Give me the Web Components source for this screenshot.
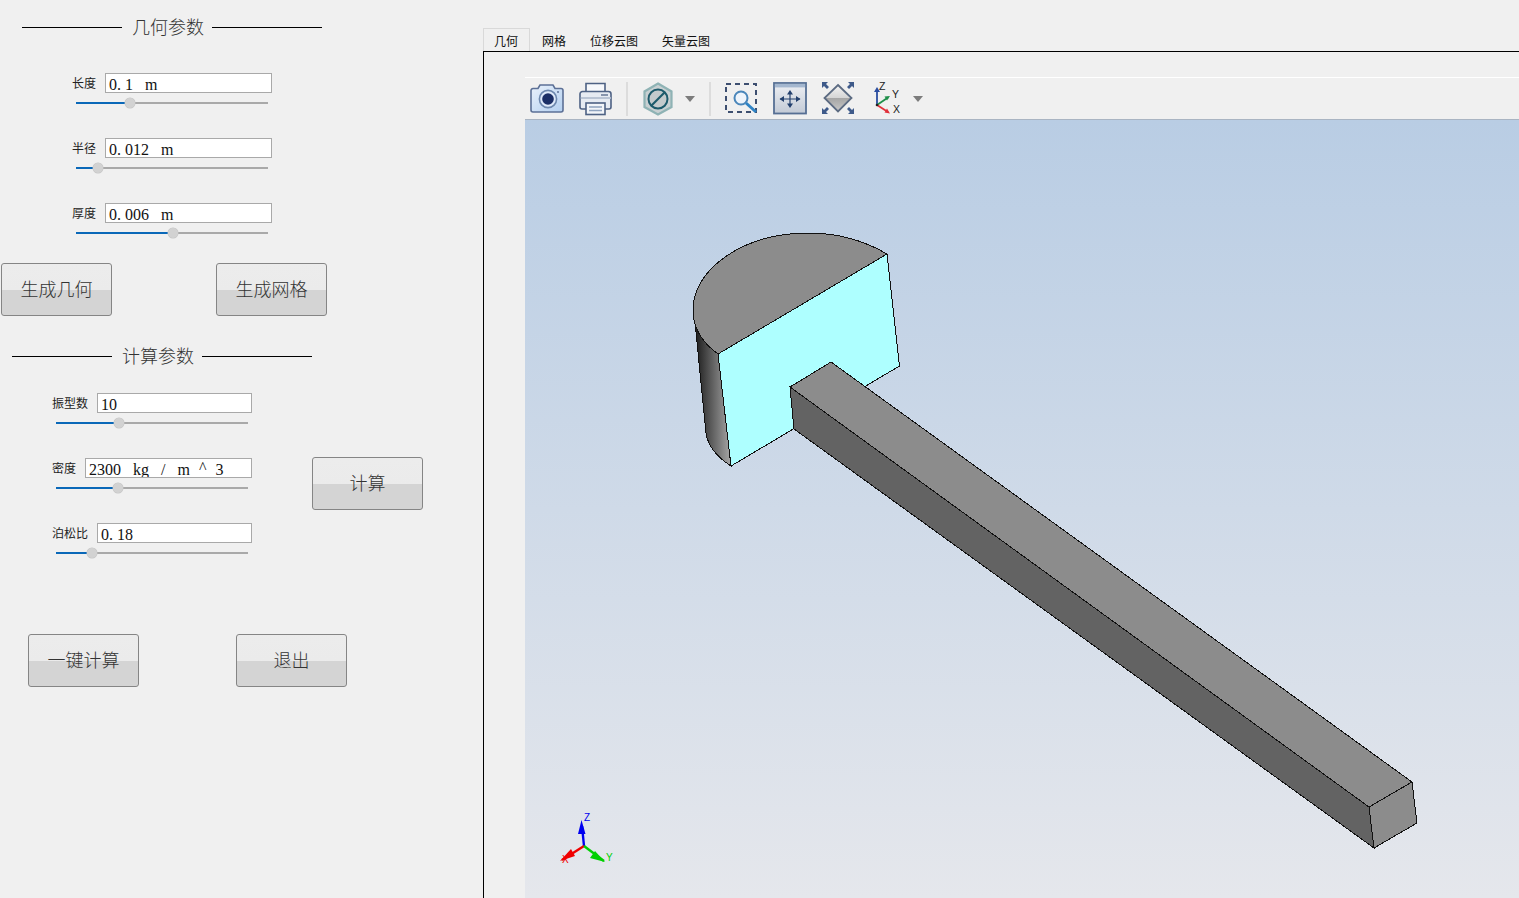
<!DOCTYPE html>
<html lang="zh">
<head>
<meta charset="utf-8">
<title>几何参数</title>
<style>
  html, body { margin: 0; padding: 0; height: 100%; overflow: hidden; background: #f0f0f0; }
  body { font-family: "Liberation Serif", "Noto Sans CJK SC", serif; }
</style>
</head>
<body>
<app-shell>
  <side-panel slot="side">
    <section-title inset="22">几何参数</section-title>
    <param-group inset="72" top="19">
      <param-field label="长度" value="0.1 m" pos="54"></param-field>
      <param-field label="半径" value="0.012 m" pos="22"></param-field>
      <param-field label="厚度" value="0.006 m" pos="97"></param-field>
    </param-group>
    <button-row top="20" inset="1" gap="104">
      <qt-button>生成几何</qt-button>
      <qt-button>生成网格</qt-button>
    </button-row>
    <section-title inset="12" top="13">计算参数</section-title>
    <compute-row>
      <param-group inset="52" top="10">
        <param-field label="振型数" value="10" pos="63"></param-field>
        <param-field label="密度" value="2300 kg / m ^ 3" pos="62"></param-field>
        <param-field label="泊松比" value="0.18" pos="36"></param-field>
      </param-group>
      <qt-button slot="action">计算</qt-button>
    </compute-row>
    <button-row top="71" inset="28" gap="97">
      <qt-button>一键计算</qt-button>
      <qt-button>退出</qt-button>
    </button-row>
  </side-panel>
  <tab-view>
    <tab-item active>几何</tab-item>
    <tab-item>网格</tab-item>
    <tab-item>位移云图</tab-item>
    <tab-item>矢量云图</tab-item>
    <cad-view slot="page"></cad-view>
  </tab-view>
</app-shell>

<script>
const cjk = '"Noto Sans CJK SC", sans-serif'

customElements.define('app-shell', class extends HTMLElement {
  constructor() {
    super()
    this.attachShadow({ mode: 'open' }).innerHTML = `
      <style>
        :host { display: flex; width: 1519px; height: 898px; overflow: hidden; background: #f0f0f0; }
        .side { flex: 0 0 483px; }
        .main { flex: 1; min-width: 0; display: flex; }
      </style>
      <div class="side"><slot name="side"></slot></div>
      <div class="main"><slot></slot></div>`
  }
})

customElements.define('side-panel', class extends HTMLElement {
  constructor() {
    super()
    this.attachShadow({ mode: 'open' }).innerHTML = `
      <style>:host { display: flex; flex-direction: column; align-items: flex-start; }</style>
      <slot></slot>`
  }
})

customElements.define('section-title', class extends HTMLElement {
  constructor() {
    super()
    this.attachShadow({ mode: 'open' }).innerHTML = `
      <style>
        :host { display: flex; align-items: center; gap: 10px; height: 54px; }
        i { display: block; width: 100px; height: 1px; background: #000; }
        i:last-child { width: 110px; margin-left: -1px; }
        span { font: 300 18px/24px ${cjk}; color: #333; width: 71px; white-space: nowrap; margin-top: -2px; }
      </style>
      <i></i><span><slot></slot></span><i></i>`
  }
  connectedCallback() {
    this.style.marginLeft = (this.getAttribute('inset') || 0) + 'px'
    this.style.marginTop = (this.getAttribute('top') || 0) + 'px'
  }
})

customElements.define('param-group', class extends HTMLElement {
  constructor() {
    super()
    this.attachShadow({ mode: 'open' }).innerHTML = `
      <style>:host { display: flex; flex-direction: column; gap: 25px; width: 200px; }</style>
      <slot></slot>`
  }
  connectedCallback() {
    this.style.marginLeft = this.getAttribute('inset') + 'px'
    this.style.marginTop = this.getAttribute('top') + 'px'
  }
})

customElements.define('param-field', class extends HTMLElement {
  constructor() {
    super()
    this.attachShadow({ mode: 'open' }).innerHTML = `
      <style>
        :host { display: block; height: 40px; }
        .row { display: flex; align-items: center; gap: 9px; height: 20px; }
        label { font: 12px/16px ${cjk}; color: #222; white-space: nowrap; }
        .box {
          flex: 1; min-width: 0; box-sizing: border-box; height: 20px; padding-left: 3px;
          background: #fff; border: 1px solid #a9a9a9; overflow: hidden;
          font: 16px/21px "Liberation Serif", serif; color: #111; white-space: pre; word-spacing: 8px;
        }
        .dot { margin-right: 4px; }
        .hat { margin: 0 -3px; position: relative; top: -2px; }
        qt-slider { margin: 5px 4px 0; }
      </style>
      <div class="row"><label></label><div class="box"></div></div>
      <qt-slider></qt-slider>`
  }
  connectedCallback() {
    const root = this.shadowRoot
    root.querySelector('label').textContent = this.getAttribute('label')
    const box = root.querySelector('.box')
    box.textContent = ''
    // SimSun-like spacing: wide period, narrow caret
    this.getAttribute('value').split(/([.^])/).forEach(part => {
      if (part === '.' || part === '^') {
        const mark = document.createElement('span')
        mark.className = part === '.' ? 'dot' : 'hat'
        mark.textContent = part
        box.append(mark)
      } else {
        box.append(part)
      }
    })
    root.querySelector('qt-slider').setAttribute('pos', this.getAttribute('pos'))
  }
})

customElements.define('qt-slider', class extends HTMLElement {
  static observedAttributes = ['pos']
  constructor() {
    super()
    this.attachShadow({ mode: 'open' }).innerHTML = `
      <style>
        :host { display: flex; height: 10px; position: relative; align-items: center; }
        .track { flex: 1; height: 2px; background: #a9a9a9; }
        .done { height: 2px; background: #0a68b8; }
        .knob {
          position: absolute; top: 0; width: 10px; height: 10px; margin-left: -5px; border-radius: 50%;
          background: #d2d2d2; box-shadow: 0 0 0 .5px #c4c4c4;
        }
      </style>
      <div class="track"><div class="done"></div></div><div class="knob"></div>`
  }
  attributeChangedCallback(name, old, value) {
    this.shadowRoot.querySelector('.done').style.width = value + 'px'
    this.shadowRoot.querySelector('.knob').style.left = value + 'px'
  }
})

customElements.define('button-row', class extends HTMLElement {
  constructor() {
    super()
    this.attachShadow({ mode: 'open' }).innerHTML = `
      <style>:host { display: flex; }</style>
      <slot></slot>`
  }
  connectedCallback() {
    this.style.marginTop = this.getAttribute('top') + 'px'
    this.style.marginLeft = this.getAttribute('inset') + 'px'
    this.style.gap = this.getAttribute('gap') + 'px'
  }
})

customElements.define('compute-row', class extends HTMLElement {
  constructor() {
    super()
    this.attachShadow({ mode: 'open' }).innerHTML = `
      <style>
        :host { display: flex; align-items: flex-start; }
        .action { margin: 74px 0 0 60px; }
      </style>
      <slot></slot><div class="action"><slot name="action"></slot></div>`
  }
})

customElements.define('qt-button', class extends HTMLElement {
  constructor() {
    super()
    this.attachShadow({ mode: 'open' }).innerHTML = `
      <style>
        :host {
          display: flex; align-items: center; justify-content: center; box-sizing: border-box;
          width: 111px; height: 53px; padding-bottom: 4px; border: 1px solid #858585; border-radius: 3px;
          background: linear-gradient(#ececec 0, #ebebeb 51%, #d4d4d4 51%, #d4d4d4 100%);
          font: 300 18px/24px ${cjk}; color: #333;
        }
      </style>
      <slot></slot>`
  }
})

customElements.define('tab-view', class extends HTMLElement {
  constructor() {
    super()
    this.attachShadow({ mode: 'open' }).innerHTML = `
      <style>
        :host { display: flex; flex-direction: column; flex: 1; min-width: 0; height: 898px; }
        .tabs { display: flex; align-items: flex-end; height: 52px; box-sizing: border-box; border-bottom: 1px solid #000; flex: none; padding-top: 29px; }
        .page { flex: 1; min-height: 0; display: flex; border-left: 1px solid #000; padding: 25px 0 0 41px; }
      </style>
      <div class="tabs"><slot></slot></div>
      <div class="page"><slot name="page"></slot></div>`
  }
})

customElements.define('tab-item', class extends HTMLElement {
  constructor() {
    super()
    this.attachShadow({ mode: 'open' }).innerHTML = `
      <style>
        :host {
          display: block; box-sizing: border-box; height: 23px; padding: 1px 12px 0;
          font: 12px/24px ${cjk}; color: #111; white-space: nowrap;
        }
        :host([active]) { padding: 0 11px 0 10px; border: 1px solid #d9d9d9; border-bottom: 0; }
      </style>
      <slot></slot>`
  }
})

customElements.define('cad-view', class extends HTMLElement {
  constructor() {
    super()
    this.attachShadow({ mode: 'open' }).innerHTML = `
      <style>
        :host { display: flex; flex-direction: column; flex: 1; min-width: 0; }
      </style>
      <cad-toolbar></cad-toolbar>
      <cad-canvas></cad-canvas>`
  }
})

customElements.define('cad-toolbar', class extends HTMLElement {
  constructor() {
    super()
    this.attachShadow({ mode: 'open' }).innerHTML = `
      <style>
        :host {
          display: flex; align-items: center; flex: none; box-sizing: border-box; height: 43px; padding: 1px 0 0 5px;
          background: #f0f0f0; border-top: 1px solid #fff; border-bottom: 1px solid #a9b4c2;
        }
        svg { display: block; flex: none; width: 34px; height: 34px; overflow: visible; }
        .sep { width: 2px; height: 34px; background: #dcdcdc; flex: none; }
        .caret { width: 10px; height: 6px; }
      </style>
      <svg viewBox="0 0 34 34">
        <defs><linearGradient id="cam" x1="0" y1="0" x2="1" y2="1"><stop offset="0" stop-color="#e9f1fb"/><stop offset="1" stop-color="#b4d0f0"/></linearGradient></defs>
        <path d="M1 8.500a2 2 0 0 1 2-2h5l2-3.500h13l2 3.500h6a2 2 0 0 1 2 2V28a2 2 0 0 1-2 2H3a2 2 0 0 1-2-2z" fill="url(#cam)" stroke="#5c7096" stroke-width="1.600"/>
        <circle cx="18" cy="17" r="8.600" fill="#dfeafa" stroke="#6d88ae" stroke-width="1.600"/>
        <circle cx="18" cy="17" r="5.800" fill="#1b2f66"/>
        <circle cx="28" cy="10" r="1" fill="#5c7096"/>
      </svg>
      <svg viewBox="0 0 34 34" style="margin-left:15px">
        <path d="M7 10V1.500h19V10" fill="#f6f8fb" stroke="#4e6284" stroke-width="1.600"/>
        <path d="M1 12a2.500 2.500 0 0 1 2.500-2.500h26A2.500 2.500 0 0 1 32 12v13a2 2 0 0 1-2 2H3a2 2 0 0 1-2-2z" fill="#e6ebf2" stroke="#4e6284" stroke-width="1.600"/>
        <path d="M1.800 16h30" stroke="#b9c4d4" stroke-width="2"/>
        <path d="M22 13h7" stroke="#6e7f9a" stroke-width="1.600"/>
        <rect x="7" y="21" width="19" height="11.500" fill="#f2f5f9" stroke="#4e6284" stroke-width="1.600"/>
        <path d="M10 25h13M10 28.500h13" stroke="#8fa3bf" stroke-width="1.600"/>
      </svg>
      <div class="sep" style="margin-left:13px"></div>
      <svg viewBox="0 0 34 34" style="margin-left:13px">
        <path d="M17 1.500 30.500 9.500V25L17 32.500 3.500 25V9.500z" fill="#c8d0d2" stroke="#8fb3b5" stroke-width="2.200"/>
        <circle cx="17" cy="17" r="9.500" fill="#c4cacc" stroke="#1d5a6b" stroke-width="2"/>
        <path d="M10.500 23.500 23.500 10.500" stroke="#1d5a6b" stroke-width="2.200"/>
      </svg>
      <svg class="caret" viewBox="0 0 10 6" style="margin-left:10px"><path d="M0 0h10L5 6z" fill="#7c7c7c"/></svg>
      <div class="sep" style="margin-left:14px"></div>
      <svg viewBox="0 0 34 34" style="margin-left:13px">
        <rect x="2" y="2" width="30" height="28" fill="none" stroke="#3d4f70" stroke-width="2" stroke-dasharray="5 4"/>
        <circle cx="17" cy="16" r="6.500" fill="#eef4fb" stroke="#4a86ba" stroke-width="2"/>
        <path d="M22 21l10 9" stroke="#2f83c4" stroke-width="3"/>
      </svg>
      <svg viewBox="0 0 34 34" style="margin-left:15px">
        <defs><linearGradient id="pan" x1="0" y1="0" x2="0" y2="1"><stop offset="0" stop-color="#eef0f4"/><stop offset="1" stop-color="#c2cad6"/></linearGradient></defs>
        <rect x="1" y="1" width="32" height="30.500" fill="url(#pan)" stroke="#566f94" stroke-width="1.800"/>
        <rect x="1.900" y="1.900" width="30.200" height="3.500" fill="#a4b7cf"/>
        <path d="M17 10v14M7 17h20" stroke="#23406e" stroke-width="1.200"/>
        <path d="M17 8l3 4.500h-6zM17 26l3-4.500h-6zM6.500 17l4.500-3v6zM27.500 17l-4.500-3v6z" fill="#23406e"/>
      </svg>
      <svg viewBox="0 0 34 34" style="margin-left:14px">
        <defs><linearGradient id="fit" x1="0" y1="0" x2="0" y2="1"><stop offset="0" stop-color="#f4f4f4"/><stop offset=".5" stop-color="#d4d4d4"/><stop offset=".5" stop-color="#a6a6a6"/><stop offset="1" stop-color="#c8c8c8"/></linearGradient></defs>
        <path d="M17 3 30.500 16 17 29.500 3.500 16z" fill="url(#fit)" stroke="#5c6b82" stroke-width="1.800"/>
        <g fill="#3e5a8a">
          <path d="M1 0h6l-2 2 3 3-2 2-3-3-2 2z"/>
          <path d="M33 0h-6l2 2-3 3 2 2 3-3 2 2z"/>
          <path d="M1 32h6l-2-2 3-3-2-2-3 3-2-2z"/>
          <path d="M33 32h-6l2-2-3-3 2-2 3 3 2-2z"/>
        </g>
      </svg>
      <svg viewBox="0 0 34 34" style="margin-left:16px">
        <g stroke-width="1.800" fill="none">
          <path d="M6 23V8" stroke="#2a4da0"/>
          <path d="M6 23 17 15.500" stroke="#1f8f4a"/>
          <path d="M6 23 17 30" stroke="#e0303a"/>
        </g>
        <path d="M6 5l3 5H3z" fill="#2a4da0"/>
        <path d="M19 14l-5.500.5 2.500 4z" fill="#1f8f4a"/>
        <path d="M19 31.500l-3-5-2.500 4z" fill="#e0303a"/>
        <circle cx="6" cy="23" r="1.300" fill="#222"/>
        <g font-family="Liberation Sans, sans-serif" font-size="10.500" fill="#222">
          <text x="8" y="8">Z</text>
          <text x="21" y="16">Y</text>
          <text x="22" y="31">X</text>
        </g>
      </svg>
      <svg class="caret" viewBox="0 0 10 6" style="margin-left:8px"><path d="M0 0h10L5 6z" fill="#7c7c7c"/></svg>`
  }
})

customElements.define('cad-canvas', class extends HTMLElement {
  constructor() {
    super()
    this.attachShadow({ mode: 'open' }).innerHTML = `
      <style>
        :host { display: block; flex: 1; min-height: 0; background: linear-gradient(#b9cde4, #e5e7ec); overflow: hidden; }
        svg { display: block; width: 994px; height: 778px; }
        .edge { stroke: #111; stroke-width: 1; shape-rendering: crispEdges; }
      </style>
      <svg viewBox="525 120 994 778">
        <defs>
          <linearGradient id="wall" gradientUnits="userSpaceOnUse" x1="696" y1="0" x2="730" y2="0">
            <stop offset="0" stop-color="#1e1e1e"/>
            <stop offset=".4" stop-color="#555"/>
            <stop offset="1" stop-color="#a4a4a4"/>
          </linearGradient>
        </defs>
        <path class="edge" d="M695 322 C698 334 706 344 718 354 L731 466 C717 457 708 447 706 433 Z" fill="url(#wall)"/>
        <path class="edge" d="M718 354 C700 341 693 326 693 310 C693 268 745 233 808 233 C838 233 865 241 887 254 Z" fill="#8c8c8c"/>
        <path class="edge" d="M718 354 887 254 899.500 366 731 466 Z" fill="#aeffff"/>
        <path class="edge" d="M790 387 831 362 1412 782 1369 807 Z" fill="#8c8c8c"/>
        <path class="edge" d="M790 387 1369 807 1374 848 794 429 Z" fill="#636363"/>
        <path class="edge" d="M1369 807 1412 782 1417 823 1374 848 Z" fill="#8c8c8c"/>

        <g stroke-width="2.400" fill="none">
          <path d="M584 846 582 826" stroke="#0000f0"/>
          <path d="M584 846 562 860" stroke="#f00000"/>
          <path d="M584 846 604 861" stroke="#00d000"/>
        </g>
        <path d="M581.500 820 585.500 834 578 834z" fill="#0000f0"/>
        <path d="M560 861 571 849 575 856z" fill="#f00000"/>
        <path d="M605 862 595 851 590 858z" fill="#00d000"/>
        <g font-family="Liberation Sans, sans-serif" font-size="10">
          <text x="584" y="821" fill="#0000f0">Z</text>
          <text x="606" y="861" fill="#00d000">Y</text>
          <text x="562" y="863" fill="#f00000">X</text>
        </g>
      </svg>`
  }
})
</script>
</body>
</html>
